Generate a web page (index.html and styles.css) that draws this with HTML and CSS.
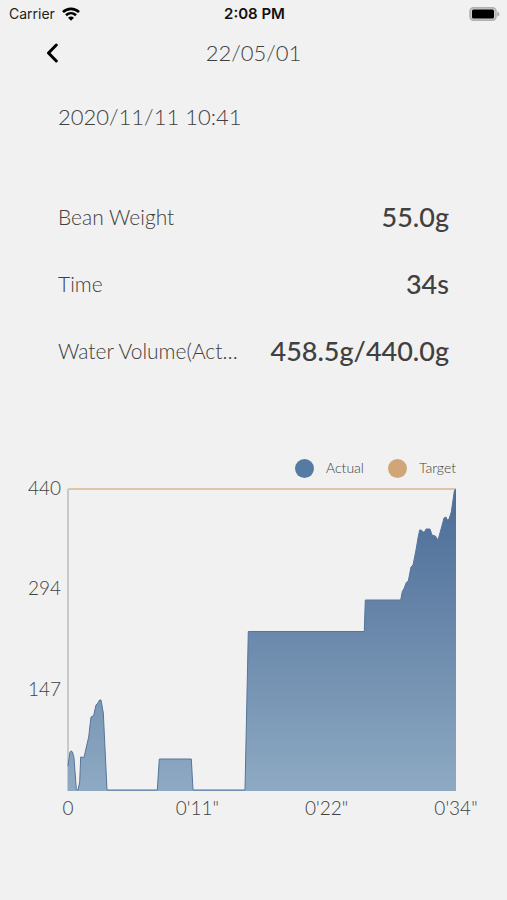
FILE: index.html
```html
<!DOCTYPE html>
<html lang="en">
<head>
<meta charset="utf-8">
<meta name="viewport" content="width=device-width, initial-scale=1">
<title>22/05/01</title>
<link rel="stylesheet" href="styles.css">
</head>
<body>
<div class="status">
  <div class="carrier">Carrier
    <svg class="wifi" viewBox="0 0 18 14" aria-hidden="true">
      <path d="M1 5.2C5.4 .7 12.600 .7 17 5.200M4 8.300C6.900 5.600 11.100 5.600 14 8.300" fill="none" stroke="#000" stroke-width="2.600"/>
      <path d="M6 10.800Q9 8.200 12 10.800L9 13.800Z"/>
    </svg>
  </div>
  <div class="clock">2:08 PM</div>
  <div class="power">
    <svg class="battery" viewBox="0 0 31 14" aria-hidden="true">
      <rect x="1" y=".8" width="26" height="12.400" rx="3.500" fill="#ccc" stroke="#b0b0b0" stroke-width="1.500"/>
      <rect x="3" y="2.500" width="22" height="9" rx="1.500"/>
      <path d="M28.300 4.500Q30.500 5.500 30.500 7T28.300 9.500Z" fill="#a9a9a9"/>
    </svg>
  </div>
</div>
<header class="nav">
  <button class="back" type="button" aria-label="Back">
    <svg viewBox="0 0 12 20" aria-hidden="true"><path d="M10.300 2 2.500 10 10.300 18" fill="none" stroke="#000" stroke-width="3" stroke-linecap="round" stroke-linejoin="round"/></svg>
  </button>
  <h1>22/05/01</h1>
</header>
<main>
  <p class="date">2020/11/11 10:41</p>
  <dl class="stats">
    <div class="stat"><dt>Bean Weight</dt><dd>55.0g</dd></div>
    <div class="stat"><dt>Time</dt><dd>34s</dd></div>
    <div class="stat"><dt>Water Volume(Act…</dt><dd>458.5g/440.0g</dd></div>
  </dl>
  <section class="chart">
    <div class="legend">
      <span class="key"><i class="dot actual"></i>Actual</span>
      <span class="key"><i class="dot target"></i>Target</span>
    </div>
    <div class="y-axis"><span>440</span><span>294</span><span>147</span><span></span></div>
    <svg class="plot" viewBox="0 0 388 302" preserveAspectRatio="none" aria-hidden="true">
      <defs>
        <linearGradient id="fill" gradientUnits="userSpaceOnUse" x1="0" y1="0" x2="0" y2="302">
          <stop offset="0" stop-color="#4c6c98"/>
          <stop offset=".5" stop-color="#6c8aac"/>
          <stop offset="1" stop-color="#8eaac3"/>
        </linearGradient>
      </defs>
      <path class="axis" d="M0 0V302"/>
      <path class="goal" d="M0 0H388"/>
      <path fill="url(#fill)" d="M0 302V277L2 263Q3 261 4.500 263L6 269L8.300 300L10 301L11.700 293L12.700 268L16 268.500L20.700 248L23 228L25.700 226.500L28 216L30 214L31.500 211H33L35.300 224L39 301H89.300L91.300 270H123.300L125 301H177L180.300 142.500H296.300L297.300 111H332.700L334.300 102.500L336.300 99L338.300 93.500L340.300 92L343 78L345 76L348 61L350 49L351.700 41H353.300L354.700 43L356.500 43L358 40H362L364 46L367.300 47L370 51L372 44L376 29L378 28L379.300 31L381 30L383.300 23L386.300 2L388 0V302Z"/>
      <path class="line" d="M0 277L2 263Q3 261 4.500 263L6 269L8.300 300L10 301L11.700 293L12.700 268L16 268.500L20.700 248L23 228L25.700 226.500L28 216L30 214L31.500 211H33L35.300 224L39 301H89.300L91.300 270H123.300L125 301H177L180.300 142.500H296.300L297.300 111H332.700L334.300 102.500L336.300 99L338.300 93.500L340.300 92L343 78L345 76L348 61L350 49L351.700 41H353.300L354.700 43L356.500 43L358 40H362L364 46L367.300 47L370 51L372 44L376 29L378 28L379.300 31L381 30L383.300 23L386.300 2L387.500 0"/>
    </svg>
    <div class="x-axis"><span>0</span><span>0'11"</span><span>0'22"</span><span>0'34"</span></div>
  </section>
</main>
</body>
</html>
```
FILE: styles.css
```css
* { box-sizing: border-box; }
body {
  margin: 0;
  background: #f1f1f1;
  color: #404040;
  font-family: Lato, "Liberation Sans", sans-serif;
  font-weight: 300;
}
h1, p, dl, dd { margin: 0; }
svg { display: block; }
.status {
  display: grid;
  grid-template-columns: 1fr auto 1fr;
  align-items: center;
  height: 28px;
  padding: 0 7px 0 9px;
  color: #222;
  font: 400 14px/20px Inter, sans-serif;
}
.carrier { display: flex; align-items: center; gap: 7px; }
.wifi { width: 18px; height: 14px; }
.clock { font-size: 15px; font-weight: 600; color: #111; }
.power { display: flex; justify-content: flex-end; }
.battery { width: 31px; height: 14px; }
.nav {
  display: grid;
  grid-template-columns: 1fr auto 1fr;
  align-items: center;
  height: 50px;
  padding: 0 46px;
}
.back {
  justify-self: start;
  padding: 0;
  border: 0;
  background: none;
}
.back svg { width: 12px; height: 20px; }
h1 { font-size: 22px; line-height: 28px; font-weight: 300; }
.date { padding: 25px 58px 0; font-size: 22px; line-height: 28px; }
.stats { padding: 52px 58px 0; }
.stat {
  display: flex;
  align-items: center;
  justify-content: space-between;
  height: 67px;
}
dt { font-size: 21px; white-space: nowrap; }
dd { color: #404040; font-size: 27px; font-weight: 500; white-space: nowrap; }
.chart {
  display: grid;
  grid-template-columns: 61px 1fr;
  column-gap: 7px;
  padding: 74px 51px 0 0;
}
.legend {
  grid-column: 1 / -1;
  display: flex;
  justify-content: flex-end;
  gap: 24px;
  height: 31px;
  font-size: 14px;
  line-height: 20px;
}
.key { display: flex; align-items: center; gap: 12px; height: 20px; }
.dot { width: 19px; height: 19px; border-radius: 50%; }
.actual { background: #567ba3; }
.target { background: #d0a678; }
.y-axis {
  display: flex;
  flex-direction: column;
  justify-content: space-between;
  margin: -2px 0 2px;
  font-size: 19px;
}
.y-axis span {
  display: flex;
  align-items: center;
  justify-content: flex-end;
  height: 0;
}
.plot { width: 100%; height: 302px; overflow: visible; }
.plot path { vector-effect: non-scaling-stroke; }
.axis { fill: none; stroke: #c9c9c9; stroke-width: 2; }
.line { fill: none; stroke: #56749c; stroke-width: 1; stroke-linejoin: round; }
.goal { fill: none; stroke: #dfc5a8; stroke-width: 2; }
.x-axis {
  grid-column: 2;
  display: flex;
  justify-content: space-between;
  padding-top: 5px;
  font-size: 19px;
  line-height: 24px;
}
.x-axis span { display: flex; justify-content: center; width: 0; }
```
